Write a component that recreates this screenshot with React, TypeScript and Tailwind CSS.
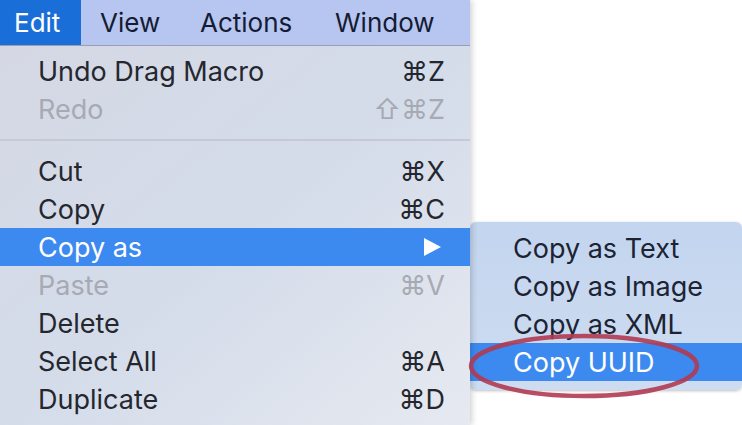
import React from "react";

type Item = { label?: string; sc?: string; disabled?: boolean; active?: boolean; sub?: boolean; sep?: boolean };

const items: Item[] = [
  { label: "Undo Drag Macro", sc: "⌘Z" },
  { label: "Redo", sc: "⇧⌘Z", disabled: true },
  { sep: true },
  { label: "Cut", sc: "⌘X" },
  { label: "Copy", sc: "⌘C" },
  { label: "Copy as", active: true, sub: true },
  { label: "Paste", sc: "⌘V", disabled: true },
  { label: "Delete" },
  { label: "Select All", sc: "⌘A" },
  { label: "Duplicate", sc: "⌘D" },
];

const subItems = ["Copy as Text", "Copy as Image", "Copy as XML", "Copy UUID"];

export default function App() {
  return (
    <div
      className="relative w-[742px] h-[425px] overflow-hidden bg-white text-[27px] leading-none"
      style={{ fontFamily: "Inter, 'Liberation Sans', sans-serif" }}
    >
      <div className="flex h-full">
        {/* Main menu */}
        <div className="w-[470px] h-full flex flex-col shadow-[2px_0_6px_rgba(0,0,0,0.18)] z-10">
          <div className="h-[46px] flex items-stretch bg-[#b6c6f0] border-b border-[#9a9eae] text-[#141b33] text-[26px]">
            <div className="w-[81px] bg-[#1a6ed8] text-white flex items-center pl-[14px]">Edit</div>
            <div className="flex items-center pl-[19px] w-[100px]">View</div>
            <div className="flex items-center pl-[19px] w-[135px]">Actions</div>
            <div className="flex items-center pl-[19px]">Window</div>
          </div>
          <div className="flex-1 flex flex-col pt-[6px] bg-gradient-to-br from-[#d5d8e4] via-[#d4dcea] to-[#e6e9f0]">
            {items.map((it, i) =>
              it.sep ? (
                <div key={i} className="h-[24px] flex items-center">
                  <div className="h-[2px] w-full bg-[#c6c9d5]" />
                </div>
              ) : (
                <div
                  key={i}
                  className={
                    "h-[38px] flex items-center justify-between pl-[38px] pr-[25px] " +
                    (it.active ? "bg-[#3c8aef] text-white" : it.disabled ? "text-[#a7aab3]" : "text-[#25272e]")
                  }
                >
                  <span>{it.label}</span>
                  {it.sub ? (
                    <svg width="20" height="20" viewBox="0 0 20 20" className="mr-[3px]">
                      <path d="M2 1 L19 10 L2 19 Z" fill="white" />
                    </svg>
                  ) : (
                    <span>{it.sc}</span>
                  )}
                </div>
              )
            )}
          </div>
        </div>
        {/* Submenu area */}
        <div className="flex-1 flex flex-col">
          <div className="h-[222px]" />
          <div className="h-[168px] rounded-[6px] bg-gradient-to-b from-[#c3d5ef] to-[#cddcf0] pt-[7px] shadow-[0_1px_3px_rgba(0,0,0,0.25)]">
            {subItems.map((s, i) => (
              <div
                key={i}
                className={
                  "h-[38px] flex items-center pl-[43px] " +
                  (i === 3 ? "bg-[#3c8aef] text-white" : "text-[#1c2333]")
                }
              >
                {s}
              </div>
            ))}
          </div>
        </div>
      </div>
      <svg className="absolute left-0 top-0 pointer-events-none z-20" width="742" height="425">
        <ellipse cx="584" cy="366" rx="113" ry="30" fill="none" stroke="#b03a52" strokeOpacity="0.9" strokeWidth="4.5" />
      </svg>
    </div>
  );
}
